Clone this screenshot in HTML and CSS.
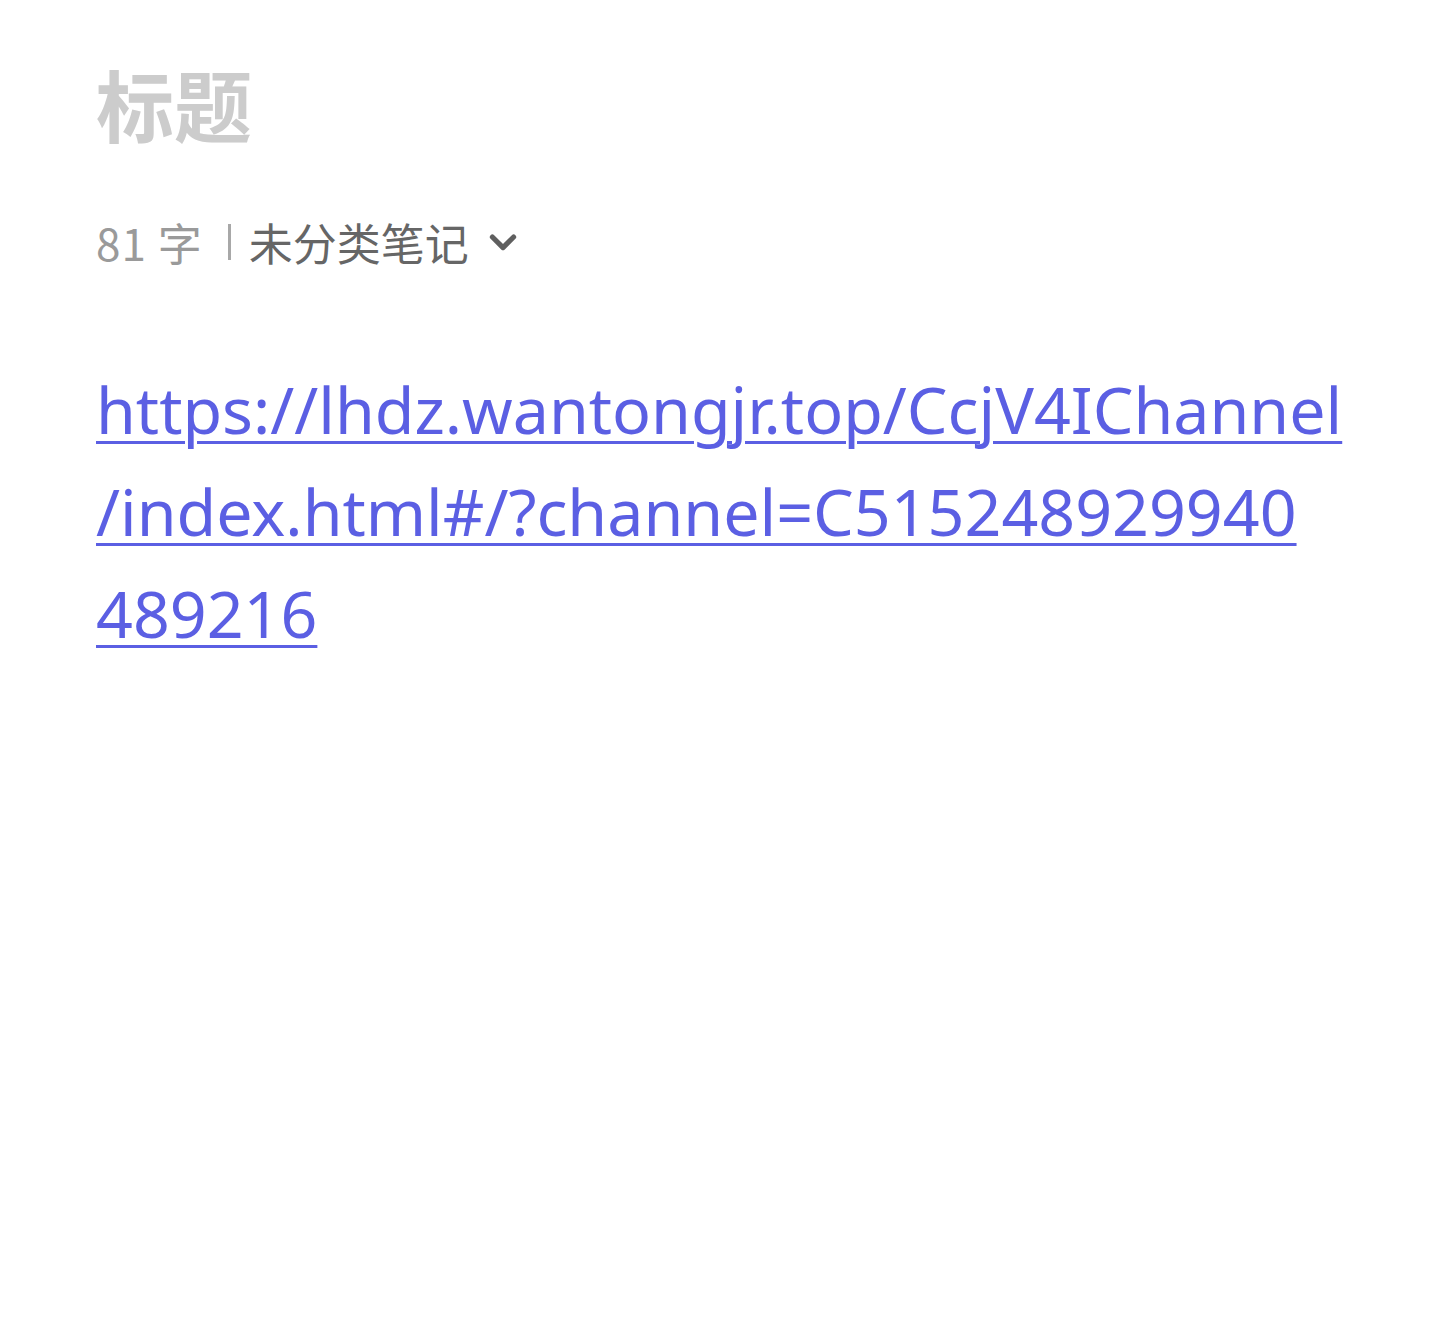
FILE: index.html
```html
<!DOCTYPE html>
<html lang="zh-CN">
<head>
    <meta charset="UTF-8">
    <meta name="viewport" content="width=device-width, initial-scale=1.0">
    <title>笔记</title>
    <link rel="stylesheet" href="styles.css">
</head>
<body>
    <div class="note">
        <h1 class="note-title">标题</h1>
        <div class="note-meta">
            <span class="count">81 字</span>
            <span class="divider"></span>
            <span class="folder">未分类笔记</span>
            <svg class="chevron" viewBox="0 0 24 24" width="34" height="34">
                <path d="M4.5 8.5 L12 16 L19.5 8.5" fill="none" stroke="#5f5f5f" stroke-width="3.6" stroke-linecap="round" stroke-linejoin="round"/>
            </svg>
        </div>
        <div class="note-body">
            <a href="#">https://lhdz.wantongjr.top/CcjV4IChannel<br>/index.html#/?channel=C515248929940<br>489216</a>
        </div>
    </div>
</body>
</html>
```

FILE: styles.css
```css
body {
    margin: 0;
    background: #ffffff;
    font-family: "Noto Sans", "Noto Sans CJK SC", sans-serif;
}
.note {
    padding: 48px 96px 0 96px;
}
.note-title {
    margin: 0;
    font-family: "Noto Sans CJK SC", sans-serif;
    font-size: 78px;
    font-weight: 700;
    line-height: 110px;
    color: #cccccc;
}
.note-meta {
    display: flex;
    align-items: center;
    margin-top: 54px;
    font-family: "Noto Sans CJK SC", sans-serif;
    font-size: 44px;
    line-height: 60px;
}
.count {
    color: #9a9a9a;
    letter-spacing: 1px;
}
.divider {
    width: 3px;
    height: 36px;
    background: #a8a8a8;
    margin: 0 18px 0 25px;
}
.folder {
    color: #666666;
}
.chevron {
    margin-left: 17px;
}
.note-body {
    margin-top: 86px;
    font-size: 64.5px;
    line-height: 102px;
}
.note-body a {
    color: #5b5fe3;
    text-decoration: underline;
    text-decoration-thickness: 3px;
    text-underline-offset: 7px;
}
```
